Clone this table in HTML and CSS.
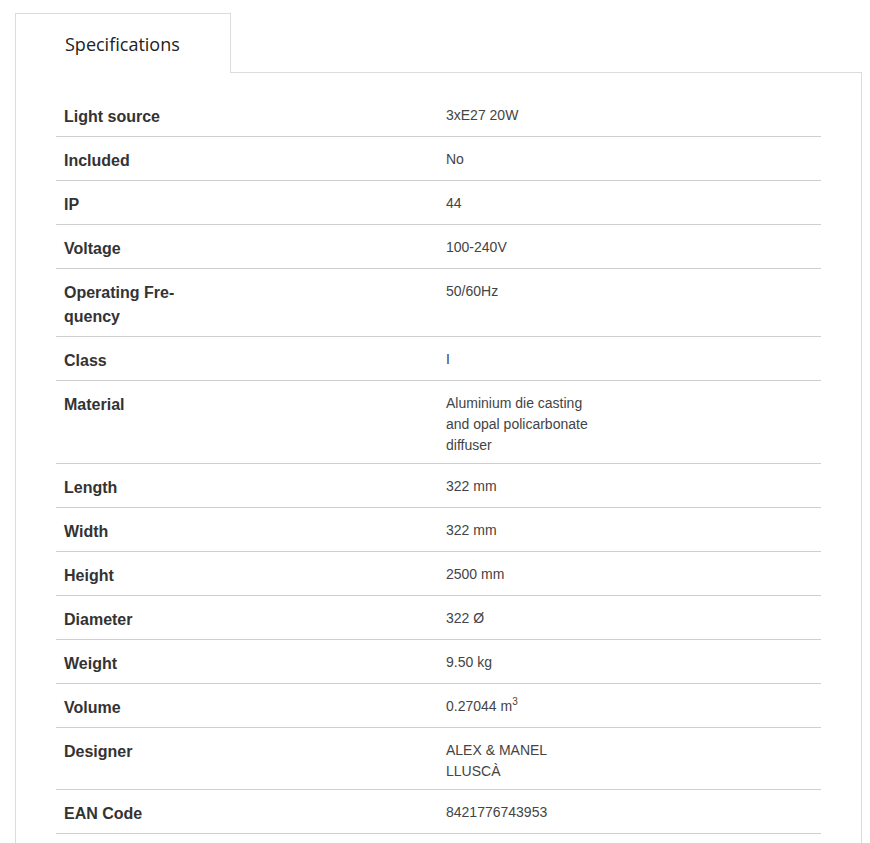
FILE: index.html
```html
<!DOCTYPE html>
<html>
<head>
<meta charset="utf-8">
<link rel="stylesheet" href="styles.css">
</head>
<body>
<div class="tabs">
  <div class="tab-bar">
    <div class="tab active">Specifications</div>
    <div class="tab-fill"></div>
  </div>
  <div class="panel">
    <table class="specs">
      <tr><th>Light source</th><td>3xE27 20W</td></tr>
      <tr><th>Included</th><td>No</td></tr>
      <tr><th>IP</th><td>44</td></tr>
      <tr><th>Voltage</th><td>100-240V</td></tr>
      <tr><th>Operating Fre-<br>quency</th><td>50/60Hz</td></tr>
      <tr><th>Class</th><td>I</td></tr>
      <tr><th>Material</th><td>Aluminium die casting<br>and opal policarbonate<br>diffuser</td></tr>
      <tr><th>Length</th><td>322 mm</td></tr>
      <tr><th>Width</th><td>322 mm</td></tr>
      <tr><th>Height</th><td>2500 mm</td></tr>
      <tr><th>Diameter</th><td>322 Ø</td></tr>
      <tr><th>Weight</th><td>9.50 kg</td></tr>
      <tr><th>Volume</th><td>0.27044 m<sup>3</sup></td></tr>
      <tr><th>Designer</th><td>ALEX &amp; MANEL<br>LLUSCÀ</td></tr>
      <tr><th>EAN Code</th><td>8421776743953</td></tr>
    </table>
  </div>
</div>
</body>
</html>
```

FILE: styles.css
```css
html, body {
  margin: 0;
  padding: 0;
  background: #fff;
}
body {
  padding: 13px 8px 0 15px;
  font-family: "Liberation Sans", Arial, sans-serif;
}
.tabs {
  width: 847px;
}
.tab-bar {
  display: flex;
  align-items: flex-end;
}
.tab {
  width: 216px;
  height: 60px;
  border: 1px solid #dcdcdc;
  border-bottom: none;
  box-sizing: border-box;
  font-family: "Open Sans", sans-serif;
  font-size: 18px;
  color: #222;
  padding-left: 49px;
  line-height: 61px;
}
.tab-fill {
  flex: 1;
  border-bottom: 1px solid #dcdcdc;
}
.panel {
  border-left: 1px solid #dcdcdc;
  border-right: 1px solid #dcdcdc;
  padding: 20px 40px 40px 40px;
}
.specs {
  width: 100%;
  border-collapse: collapse;
  table-layout: fixed;
}
.specs tr {
  border-bottom: 1px solid #cfcfcf;
}
.specs th {
  text-align: left;
  vertical-align: top;
  font-weight: bold;
  font-size: 16px;
  line-height: 24px;
  color: #333;
  padding: 12px 8px 7px 8px;
  width: 366px;
}
.specs td {
  vertical-align: top;
  font-size: 14px;
  line-height: 21px;
  color: #444;
  padding: 12px 8px 7px 8px;
}
.specs sup {
  font-size: 10px;
  line-height: 0;
  vertical-align: 6px;
}
```
